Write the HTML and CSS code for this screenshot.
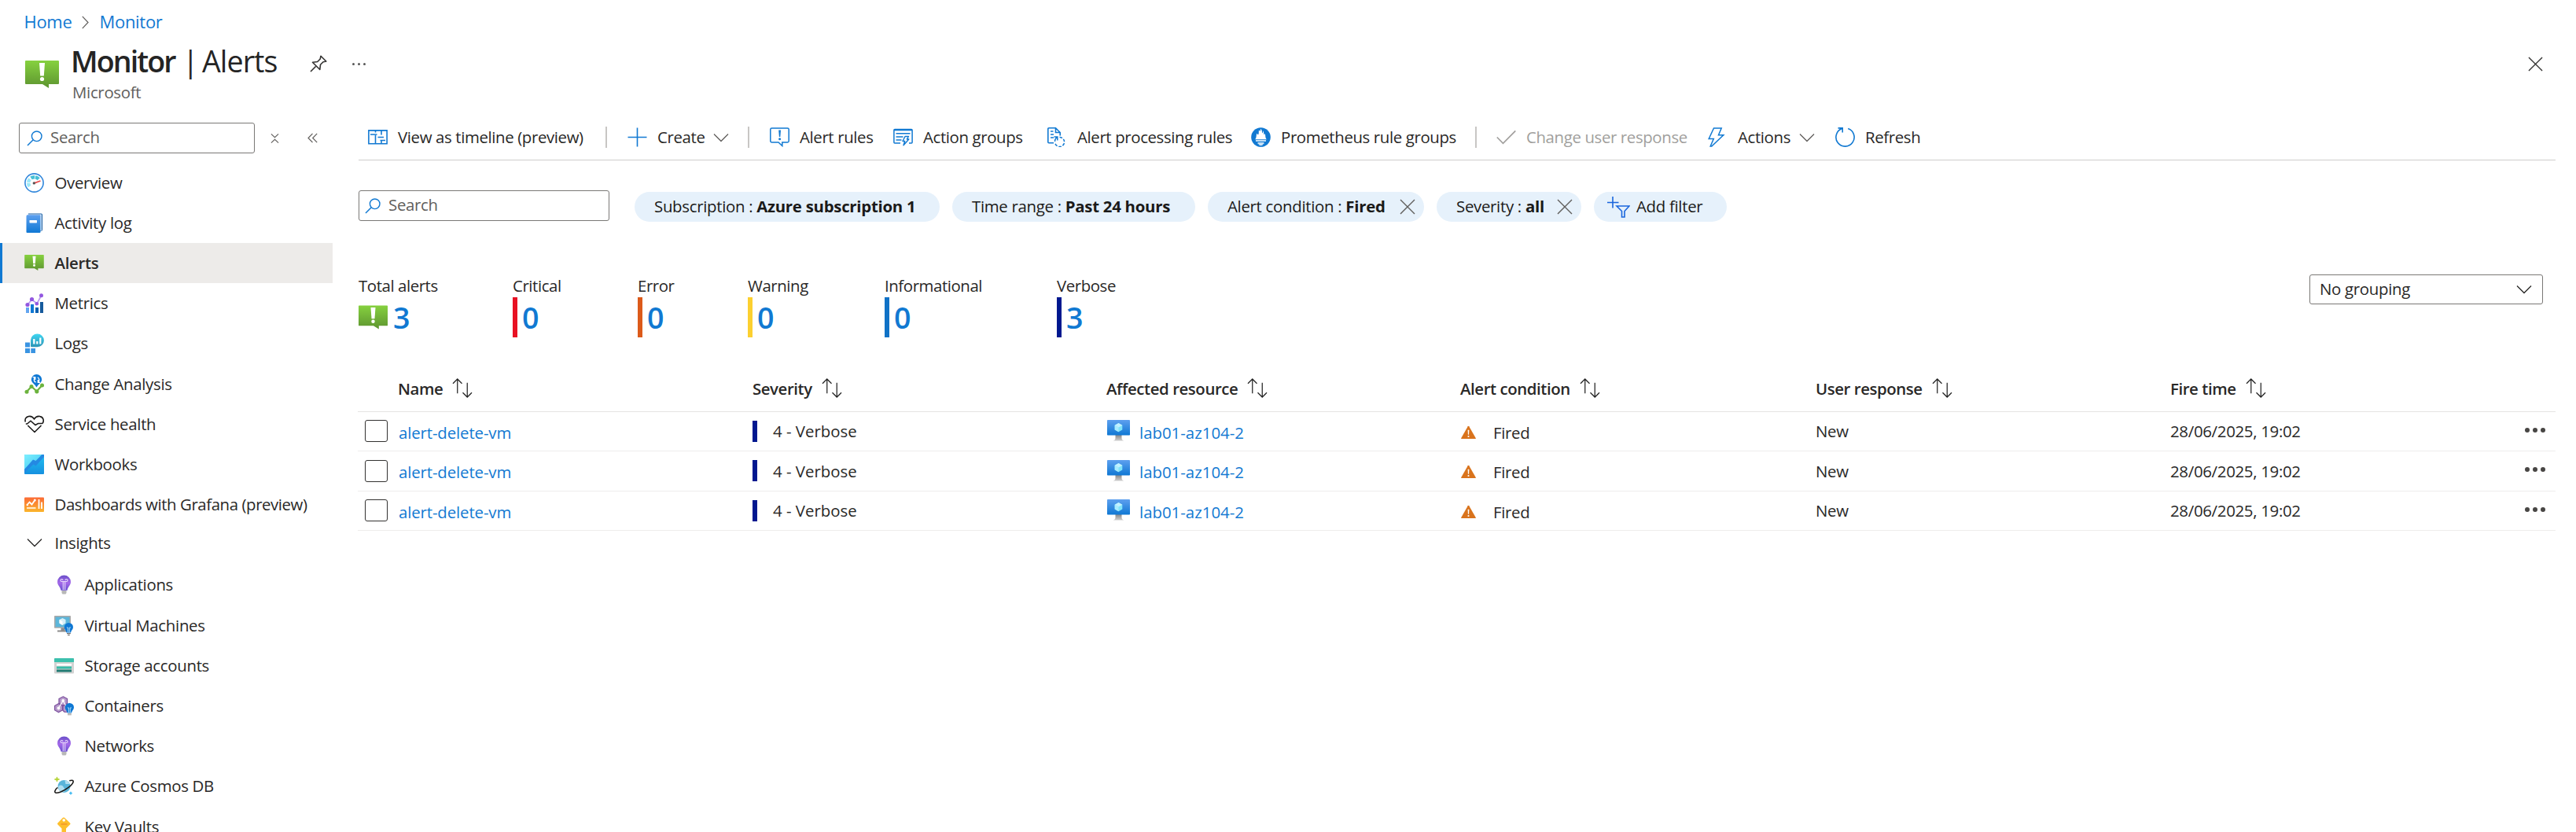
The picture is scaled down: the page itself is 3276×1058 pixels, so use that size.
FILE: index.html
```html
<!DOCTYPE html>
<html lang="en">
<head>
<meta charset="utf-8">
<title>Monitor | Alerts</title>
<link rel="stylesheet" href="styles.css">
</head>
<body>
<svg class="sprite" aria-hidden="true">
  <defs>
    <linearGradient id="g-green" x2="0" y2="1"><stop offset="0" stop-color="#86d13f"/><stop offset="1" stop-color="#5d9430"/></linearGradient>
    <linearGradient id="g-blue" x2="0" y2="1"><stop offset="0" stop-color="#5ea0ef"/><stop offset="1" stop-color="#0f78d4"/></linearGradient>
    <linearGradient id="g-teal" x2="0" y2="1"><stop offset="0" stop-color="#3fd6f2"/><stop offset="1" stop-color="#2a93b5"/></linearGradient>
    <linearGradient id="g-orange" x2="0" y2="1"><stop offset="0" stop-color="#fb6a35"/><stop offset="1" stop-color="#fbb52c"/></linearGradient>
    <linearGradient id="g-purple" x2="0" y2="1"><stop offset="0" stop-color="#6a50c8"/><stop offset=".5" stop-color="#a468ea"/><stop offset="1" stop-color="#6a50d0"/></linearGradient>
    <linearGradient id="g-sky" x2="1" y2="1"><stop offset="0" stop-color="#7fefff"/><stop offset="1" stop-color="#3fc8f0"/></linearGradient>
    <linearGradient id="g-azure" x2="0" y2="1"><stop offset="0" stop-color="#22c0f0"/><stop offset="1" stop-color="#1590e0"/></linearGradient>
    <linearGradient id="g-grey" x2="0" y2="1"><stop offset="0" stop-color="#868686"/><stop offset="1" stop-color="#d0d0d0"/></linearGradient>
  </defs>
  <symbol id="i-alert" viewBox="0 0 43 35">
    <path d="M1 0H42a1 1 0 0 1 1 1V29a1 1 0 0 1-1 1H30V35L22 30H1a1 1 0 0 1-1-1V1a1 1 0 0 1 1-1Z" fill="url(#g-green)"/>
    <path d="M18 3H25L23.800 19.500H19.200Z" fill="#fff"/><circle cx="21.500" cy="23.500" r="2.600" fill="#fff"/>
  </symbol>
  <symbol id="i-search" viewBox="0 0 20 20">
    <circle cx="12.700" cy="7.300" r="6.300" fill="none" stroke="currentColor" stroke-width="1.400"/><path d="M8.200 11.800 1 19" stroke="currentColor" stroke-width="1.500"/>
  </symbol>
  <symbol id="i-chevdown" viewBox="0 0 20 20"><path d="M1 5.500 10 14.500 19 5.500" fill="none" stroke="currentColor" stroke-width="1.300"/></symbol>
  <symbol id="i-x" viewBox="0 0 20 20"><path d="M1 1 19 19M19 1 1 19" stroke="currentColor" stroke-width="1.400"/></symbol>
  <symbol id="i-pin" viewBox="0 0 22 22">
    <path d="M1 21 7.500 14.500M14 1.200 20.800 8 17 8.800 13.500 12.300 12.800 18.500 3.500 9.200 9.700 8.500 13.200 5Z" fill="none" stroke="currentColor" stroke-width="1.600" stroke-linejoin="round"/>
  </symbol>
  <symbol id="i-collapse" viewBox="0 0 12 14"><path d="M1 .8 6 5.500 11 .8M1 13.200 6 8.500 11 13.200" fill="none" stroke="currentColor" stroke-width="1.200"/></symbol>
  <symbol id="i-dblleft" viewBox="0 0 13 13"><path d="M6.500 .8 1 6.500 6.500 12.200M12.200 .8 6.700 6.500 12.200 12.200" fill="none" stroke="currentColor" stroke-width="1.200"/></symbol>
  <symbol id="i-gauge" viewBox="0 0 25 25">
    <circle cx="12.500" cy="12.500" r="11.600" fill="#fff" stroke="#2f86db" stroke-width="1.600"/>
    <path d="M6.600 17A7.300 7.300 0 0 1 7.600 7.200" fill="none" stroke="#9be8f8" stroke-width="4.400" stroke-dasharray="4.500 .8"/>
    <path d="M8.500 6.400A7.300 7.300 0 0 1 18.500 8.300" fill="none" stroke="#46bfd6" stroke-width="4.400" stroke-dasharray="4.800 .8"/>
    <path d="M12.500 12.800 20.500 10" stroke="#e8484c" stroke-width="1.800"/><circle cx="12.300" cy="12.900" r="1.700" fill="#555"/>
  </symbol>
  <symbol id="i-log" viewBox="0 0 25 25">
    <path d="M5 .6H21.500a1.500 1.500 0 0 1 1.500 1.500V21a2 2 0 0 1-2 2H5Z" fill="#1a5fa5"/><path d="M4.500 1.500H21.800V22.500H4.500Z" fill="#e9f3fc"/>
    <path d="M2.500 4Q2.500 2.200 4 2.200H19.500a1 1 0 0 1 1 1V24a1 1 0 0 1-1 1H3.500a1 1 0 0 1-1-1Z" fill="url(#g-blue)"/>
    <rect x="6.500" y="9" width="9.500" height="3.400" rx=".6" fill="#fff"/>
  </symbol>
  <symbol id="i-metrics" viewBox="0 0 25 25">
    <path d="M2 18H6V25H2Z" fill="#63a5f0"/><path d="M8 14H12V25H8Z" fill="#0f78d4"/><path d="M14 18H18V25H14Z" fill="#0b5fb0"/><path d="M20 11H24V25H20Z" fill="#165a9c"/>
    <path d="M4 14.500 9.500 8 16 13 21.500 3" fill="none" stroke="#b99af0" stroke-width="1.700"/>
    <g fill="#9357e0"><circle cx="4" cy="14.500" r="2.600"/><circle cx="9.500" cy="7.500" r="2.600"/><circle cx="15.800" cy="13.300" r="2.300"/><circle cx="21.500" cy="2.800" r="2.500"/></g>
  </symbol>
  <symbol id="i-logs" viewBox="0 0 25 25">
    <path d="M1 11.500H7V17.500H1ZM1 19H7V25H1ZM8.300 19H14V25H8.300Z" fill="#3a94e2"/>
    <path d="M16.500 .5A8.300 8.300 0 1 1 16.500 17.300H9a1 1 0 0 1-1-1V8.500A8.300 8.300 0 0 1 16.500 .5Z" fill="url(#g-teal)"/>
    <path d="M12.300 7V13.500M16.300 10V13.500M20.300 5.500V13.500" stroke="#fff" stroke-width="2.200"/>
  </symbol>
  <symbol id="i-change" viewBox="0 0 25 25">
    <path d="M3 22 9 15.500 15.800 21.500 22.500 14" fill="none" stroke="#6cb33e" stroke-width="2.200"/>
    <g fill="#6cb33e"><circle cx="3" cy="22.300" r="2.500"/><circle cx="9" cy="15.500" r="2.500"/><circle cx="15.800" cy="21.800" r="2.600"/><circle cx="22.500" cy="14" r="2.500"/></g>
    <path d="M15.500 0A6.700 6.700 0 0 1 22.200 6.700C22.200 10.500 17.500 12.500 15.500 16.500C13.500 12.500 8.800 10.500 8.800 6.700A6.700 6.700 0 0 1 15.500 0Z" fill="#0f78d4"/>
    <path d="M13.500 4C11.500 6 12 9 14.500 10.200M17.500 10C19.700 8.200 19 5 16.800 3.800M13.800 7V3.700H10.700M17.300 7V10.400H20" fill="none" stroke="#fff" stroke-width="1.300"/>
  </symbol>
  <symbol id="i-heart" viewBox="0 0 25 25">
    <path d="M1.300 9.500C.3 6 2 3.200 5 2.600C8.500 1.700 11 3.500 12.500 5.800C14 3.500 16.500 1.700 20 2.600C24 3.300 25.500 8 23 11.500M1.800 12H3.500L8 8.200 14 13.500 17.500 11.500H23M4.300 14 13 22.500 21.500 14" fill="none" stroke="#1b1a19" stroke-width="1.600"/>
  </symbol>
  <symbol id="i-workbook" viewBox="0 0 25 25">
    <rect width="25" height="25" rx="1" fill="url(#g-azure)"/><path d="M1 0H22L14 10.500 12 7 0 19V1A1 1 0 0 1 1 0Z" fill="url(#g-sky)"/>
    <path d="M0 19 11 6.500 14.500 8 22.500 0H25V3L14.500 14.500 11.500 12.500 0 23.500Z" fill="#2489e2"/>
  </symbol>
  <symbol id="i-grafana" viewBox="0 0 25 25">
    <rect y="3.500" width="25" height="18.500" rx="1" fill="url(#g-orange)"/>
    <path d="M3.500 13 6.500 9.500 9.500 12.500 13.500 6.800M18.500 6V18M22 9.500V18" fill="none" stroke="#fff" stroke-width="1.800"/><path d="M3 17H14.500" stroke="#ffe9c8" stroke-width="2.200"/>
    <circle cx="13.300" cy="7" r="1.500" fill="#fff"/><circle cx="3.800" cy="13" r="1.300" fill="#fff"/>
  </symbol>
  <symbol id="i-bulb" viewBox="0 0 25 25">
    <path d="M9.500 20H15.500V23L14.500 24.500H10.500L9.500 23Z" fill="#b8b8b8"/>
    <path d="M12.500 .5A8.500 8.500 0 0 1 21 9C21 13 17.500 15 16.500 19.700H8.500C7.500 15 4 13 4 9A8.500 8.500 0 0 1 12.500 .5Z" fill="url(#g-purple)"/>
    <path d="M11.300 19V8.500H9.500A1.500 1.500 0 1 1 11 7M13.700 19V8.500H15.500A1.500 1.500 0 1 0 14 7M10 8.500H15" fill="none" stroke="#e9dcfb" stroke-width="1.100"/>
  </symbol>
  <symbol id="i-vminsight" viewBox="0 0 25 25">
    <path d="M8.500 15H13.500V18.500H17V20.500H4V18.500H8.500Z" fill="#8c8c8c"/><rect x="0" y="0" width="21" height="15.800" rx=".8" fill="#a9a9a9"/><rect x="1.500" y="1.500" width="18" height="12.800" fill="#5cb6da"/>
    <path d="M10.500 3 14.500 5V9.500L10.500 12 6.500 9.500V5Z" fill="#d6eff8"/><path d="M10.500 7.300V12L6.500 9.500V5Z" fill="#fff"/>
    <path d="M18.300 9A5.600 5.600 0 0 1 24 14.600C24 17.500 21.500 18.500 21 21.500H15.600C15 18.500 12.700 17.500 12.700 14.600A5.600 5.600 0 0 1 18.300 9Z" fill="#0f78d4"/>
    <path d="M17.400 21V15H15.800M19.300 21V15H21" fill="none" stroke="#a8daf5" stroke-width="1"/><path d="M16 22.600H20.800M17 24.500H19.800" stroke="#555" stroke-width="1"/>
  </symbol>
  <symbol id="i-storage" viewBox="0 0 25 25">
    <rect y="3" width="25" height="19.500" rx="1" fill="#d2d2d2"/><path d="M1 3H24a1 1 0 0 1 1 1V8H0V4A1 1 0 0 1 1 3Z" fill="#3cc0ad"/>
    <rect x="3" y="10" width="19" height="2.600" fill="#fff"/><rect x="3" y="13.500" width="19" height="3" fill="#38bba8"/><rect x="3" y="17.500" width="19" height="3" fill="#227c74"/>
  </symbol>
  <symbol id="i-container" viewBox="0 0 25 25">
    <g fill="#b79acb" stroke="#7b4f9d" stroke-width="1.200"><path d="M11.200 .8 16.500 3.500V9.500L11.200 12.300 6 9.500V3.500Z"/><path d="M5.500 9.800 10.500 12.500V18L5.500 20.800 .6 18V12.500Z"/><path d="M16 11 18 12V20.500H13L11 18.500V13Z"/></g>
    <path d="M11.200 6 5.500 15.500M11.200 6 15.500 14" stroke="#fff" stroke-width="1.300"/><circle cx="11.200" cy="6" r="1.900" fill="#fff"/><circle cx="5.500" cy="15.500" r="1.900" fill="#fff"/>
    <path d="M19.300 9A5.600 5.600 0 0 1 25 14.600C25 17.500 22.500 18.500 22 21.500H16.600C16 18.500 13.700 17.500 13.700 14.600A5.600 5.600 0 0 1 19.300 9Z" fill="#0f78d4"/>
    <path d="M18.400 21V15H16.800M20.300 21V15H22" fill="none" stroke="#a8daf5" stroke-width="1"/><path d="M17 22H21.800V24.500H17Z" fill="#b8b8b8"/>
  </symbol>
  <symbol id="i-cosmos" viewBox="0 0 26 25">
    <circle cx="13" cy="13" r="8.300" fill="#59b4d9"/><path d="M5.500 13.500C7 10.500 11 11 12 13.500S16 16 13 20.500C8 20.500 5 17 5.500 13.500M14 5C18 5 20 8 20.500 10H15Z" fill="#b0def0"/>
    <path d="M20 5.500C24 4.300 26 5 24.800 8C23 12 15 18 8 20.500C3 22.300 0 22 1 19C1.600 17.200 3 15.600 4.600 14.500" fill="none" stroke="#1b1a19" stroke-width="1.600"/>
    <path d="M3.600 .5 4.300 3 6.800 3.700 4.300 4.400 3.600 6.900 2.900 4.400 .4 3.700 2.900 3Z" fill="#b4d334" stroke="#b4d334"/>
    <path d="M21.800 20V24M19.800 22H23.800" stroke="#32b5f0" stroke-width="1.400"/>
  </symbol>
  <symbol id="i-key" viewBox="0 0 25 25">
    <path d="M11 .8Q12 0 13 .8L20 7.500Q21 8.500 20 9.500L15 14.500V22L12.500 25 9.500 22V14.500L4.500 9.500Q3.500 8.500 4.500 7.500Z" fill="#fdbf2d"/><circle cx="12.200" cy="4" r="1.800" fill="#fff"/><path d="M8.500 9H16.500" stroke="#f59a2a" stroke-width="1.700"/>
  </symbol>
  <symbol id="i-timeline" viewBox="0 0 25 25">
    <path d="M.9 3.900H24.100V20.700H.9ZM9.500 10V20.500M17 4V9.500M17 17V20.500M9.500 4V6.500M3 9H11.500M12.500 12.500H20M15.500 16.500H22" fill="none" stroke="currentColor" stroke-width="1.600"/>
  </symbol>
  <symbol id="i-plus" viewBox="0 0 25 25"><path d="M12.500 .5V24.500M.5 12.500H24.500" stroke="currentColor" stroke-width="1.600"/></symbol>
  <symbol id="i-rule" viewBox="0 0 25 25">
    <path d="M2.500 .9H22.500A1.700 1.700 0 0 1 24.200 2.600V17.300A1.700 1.700 0 0 1 22.500 19H15.800V23.500L11 19H2.500A1.700 1.700 0 0 1 .8 17.300V2.600A1.700 1.700 0 0 1 2.500 .9Z" fill="none" stroke="currentColor" stroke-width="1.500"/>
    <path d="M11.200 3.500H14L13.300 12H11.900Z" fill="currentColor"/><circle cx="12.600" cy="14.800" r="1.500" fill="currentColor"/>
  </symbol>
  <symbol id="i-group" viewBox="0 0 25 25">
    <path d="M9 20H1.900A1 1 0 0 1 .9 19V3.600A1 1 0 0 1 1.900 2.600H23.100A1 1 0 0 1 24.100 3.600V19A1 1 0 0 1 23.100 20H20M1 3.500H24M3.500 7.800H21.500M3.500 11.900H12.500M3.500 16H10.500" fill="none" stroke="currentColor" stroke-width="1.500"/>
    <path d="M15 11.500H19.500L17.300 15H19.800L13 22.800 14.700 17.500H12Z" fill="#fff" stroke="currentColor" stroke-width="1.400" stroke-linejoin="round"/>
  </symbol>
  <symbol id="i-processing" viewBox="0 0 25 25">
    <path d="M8 19.700H1.900A1.100 1.100 0 0 1 .8 18.600V1.900A1.100 1.100 0 0 1 1.900 .8H10.500L16.200 6.500V10.500M10.500 .8V6.500H16.200M4 5H7.500M4 9H8M4 13H8" fill="none" stroke="currentColor" stroke-width="1.600"/>
    <path d="M8.500 12H12.800V16.500M12.800 12.300C10.500 13.500 9.500 15.500 9.500 18" fill="none" stroke="currentColor" stroke-width="1.500"/>
    <path d="M15.500 12.500A6 6 0 1 1 9.600 19" fill="none" stroke="currentColor" stroke-width="1.500" stroke-dasharray="3.600 1.800"/>
  </symbol>
  <symbol id="i-prom" viewBox="0 0 25 25">
    <circle cx="12.500" cy="12.500" r="12.300" fill="currentColor"/>
    <path d="M5.200 15.200C7.500 12.500 6 10.500 7.600 7.500C8 9 8.800 9.500 9.300 9C10.300 7 9.300 4.500 10.300 3C10.800 5.500 12 5.500 12.300 1.800C14.500 4 13.700 6.500 14.600 7.500C15.300 6.500 14.900 5 15.300 4.200C16.800 7 15.800 8.500 16.800 9.200C17.300 9 17.500 8.500 17.500 7.800C19 10.500 17.500 12.500 19.800 15.200Z" fill="#fff"/>
    <path d="M6 17H19M8.500 20H16.500" stroke="#fff" stroke-width="1.500"/><path d="M9.300 21.200H15.700Q15 23 12.500 23T9.300 21.200" fill="#fff"/>
  </symbol>
  <symbol id="i-check" viewBox="0 0 25 25"><path d="M.8 12.500 8.500 20.300 24.300 4.300" fill="none" stroke="currentColor" stroke-width="1.700"/></symbol>
  <symbol id="i-bolt" viewBox="0 0 25 25"><path d="M7.500 1H17.200L13.500 9.700H19.800L4.800 24H3.200L7.300 14.500H1.200Z" fill="none" stroke="currentColor" stroke-width="1.500"/></symbol>
  <symbol id="i-refresh" viewBox="0 0 25 25"><path d="M16.200 1.500A11.600 11.600 0 1 1 8.500 1.600M3.500 .9H9.200V6.500" fill="none" stroke="currentColor" stroke-width="1.600"/></symbol>
  <symbol id="i-addfilter" viewBox="0 0 29 27"><path d="M7 0V14.500M0 7.500H14.500M12 12H28L22 18.500V26H18.500V18.500Z" fill="none" stroke="#1a66dd" stroke-width="1.600"/></symbol>
  <symbol id="i-sort" viewBox="0 0 27 26"><path d="M7 1V20M1 7 7 1 13 7M20 6V25M14 19 20 25 26 19" fill="none" stroke="#242424" stroke-width="1.300"/></symbol>
  <symbol id="i-vm" viewBox="0 0 29 27">
    <path d="M10.500 19H18.500V23Q18.500 25.500 21.500 26.500H7.500Q10.500 25.500 10.500 23Z" fill="url(#g-grey)"/><rect width="29" height="19.500" rx=".8" fill="url(#g-blue)"/>
    <path d="M14.500 4 19.300 6.800V12.500L14.500 15.300 9.700 12.500V6.800Z" fill="#7fe3fa"/><path d="M14.500 4 19.300 6.800 14.500 9.600 9.700 6.800Z" fill="#c3f1ff"/><path d="M14.500 9.600V15.300L9.700 12.500V6.800Z" fill="#a8ebff"/>
  </symbol>
  <symbol id="i-fired" viewBox="0 0 20 18">
    <path d="M9.200 .9Q10 -.3 10.800 .9L19.700 16.300Q20.200 17.500 19 17.500H1Q-.2 17.500 .3 16.300Z" fill="#d9731c"/><path d="M9.100 5.500H10.900L10.600 12H9.400Z" fill="#fff"/><circle cx="10" cy="14.300" r="1.100" fill="#fff"/>
  </symbol>
</svg>

<nav class="breadcrumb">
  <a>Home</a>
  <svg class="crumb-sep" viewBox="0 0 9 17"><path d="M.8 .8 8 8.500 .8 16.200" fill="none" stroke="#605e5c" stroke-width="1.200"/></svg>
  <a>Monitor</a>
</nav>

<header class="title-bar">
  <svg class="title-icon"><use href="#i-alert"/></svg>
  <div class="title-text">
    <h1><strong>Monitor</strong><span class="pipe">|</span><span class="title-page">Alerts</span></h1>
    <div class="subtitle">Microsoft</div>
  </div>
  <svg class="pin"><use href="#i-pin"/></svg>
  <div class="title-dots"><i></i><i></i><i></i></div>
  <svg class="close"><use href="#i-x"/></svg>
</header>

<div class="body">
  <aside class="sidebar">
    <div class="side-tools">
      <div class="search-box side-search"><svg><use href="#i-search"/></svg><span>Search</span></div>
      <svg class="collapse"><use href="#i-collapse"/></svg>
      <svg class="dblleft"><use href="#i-dblleft"/></svg>
    </div>
    <ul class="menu">
      <li><svg><use href="#i-gauge"/></svg><span>Overview</span></li>
      <li><svg><use href="#i-log"/></svg><span>Activity log</span></li>
      <li class="active"><svg class="menu-alert"><use href="#i-alert"/></svg><span>Alerts</span></li>
      <li><svg><use href="#i-metrics"/></svg><span>Metrics</span></li>
      <li><svg><use href="#i-logs"/></svg><span>Logs</span></li>
      <li><svg><use href="#i-change"/></svg><span>Change Analysis</span></li>
      <li><svg><use href="#i-heart"/></svg><span>Service health</span></li>
      <li><svg><use href="#i-workbook"/></svg><span>Workbooks</span></li>
      <li><svg><use href="#i-grafana"/></svg><span class="long">Dashboards with Grafana (preview)</span></li>
      <li class="group"><svg class="chev"><use href="#i-chevdown"/></svg><span>Insights</span></li>
      <li class="sub"><svg><use href="#i-bulb"/></svg><span>Applications</span></li>
      <li class="sub"><svg><use href="#i-vminsight"/></svg><span>Virtual Machines</span></li>
      <li class="sub"><svg><use href="#i-storage"/></svg><span>Storage accounts</span></li>
      <li class="sub"><svg><use href="#i-container"/></svg><span>Containers</span></li>
      <li class="sub"><svg><use href="#i-bulb"/></svg><span>Networks</span></li>
      <li class="sub"><svg><use href="#i-cosmos"/></svg><span>Azure Cosmos DB</span></li>
      <li class="sub"><svg><use href="#i-key"/></svg><span>Key Vaults</span></li>
    </ul>
  </aside>

  <main class="main">
    <div class="toolbar">
      <div class="cmd"><svg><use href="#i-timeline"/></svg><span>View as timeline (preview)</span></div>
      <div class="sep"></div>
      <div class="cmd"><svg><use href="#i-plus"/></svg><span>Create</span><svg class="chev"><use href="#i-chevdown"/></svg></div>
      <div class="sep"></div>
      <div class="cmd"><svg><use href="#i-rule"/></svg><span>Alert rules</span></div>
      <div class="cmd"><svg><use href="#i-group"/></svg><span>Action groups</span></div>
      <div class="cmd"><svg><use href="#i-processing"/></svg><span>Alert processing rules</span></div>
      <div class="cmd"><svg><use href="#i-prom"/></svg><span>Prometheus rule groups</span></div>
      <div class="sep"></div>
      <div class="cmd disabled"><svg><use href="#i-check"/></svg><span>Change user response</span></div>
      <div class="cmd"><svg><use href="#i-bolt"/></svg><span>Actions</span><svg class="chev"><use href="#i-chevdown"/></svg></div>
      <div class="cmd"><svg><use href="#i-refresh"/></svg><span>Refresh</span></div>
    </div>

    <div class="filters">
      <div class="search-box filter-search"><svg><use href="#i-search"/></svg><span>Search</span></div>
      <div class="pill subscription"><span>Subscription : <b>Azure subscription 1</b></span></div>
      <div class="pill time"><span>Time range : <b>Past 24 hours</b></span></div>
      <div class="pill condition"><span>Alert condition : <b>Fired</b></span><svg class="remove"><use href="#i-x"/></svg></div>
      <div class="pill severity"><span>Severity : <b>all</b></span><svg class="remove"><use href="#i-x"/></svg></div>
      <div class="pill add"><svg class="add-icon"><use href="#i-addfilter"/></svg><span>Add filter</span></div>
    </div>

    <div class="overview">
      <div class="stats">
        <div class="stat total"><div class="label">Total alerts</div><div class="value"><svg><use href="#i-alert"/></svg>3</div></div>
        <div class="stat critical"><div class="label">Critical</div><div class="value">0</div></div>
        <div class="stat error"><div class="label">Error</div><div class="value">0</div></div>
        <div class="stat warning"><div class="label">Warning</div><div class="value">0</div></div>
        <div class="stat info"><div class="label">Informational</div><div class="value">0</div></div>
        <div class="stat verbose"><div class="label">Verbose</div><div class="value">3</div></div>
      </div>
      <div class="select"><span>No grouping</span><svg class="chev"><use href="#i-chevdown"/></svg></div>
    </div>

    <div class="table">
      <div class="row head">
        <div></div>
        <div>Name<svg><use href="#i-sort"/></svg></div>
        <div>Severity<svg><use href="#i-sort"/></svg></div>
        <div>Affected resource<svg><use href="#i-sort"/></svg></div>
        <div>Alert condition<svg><use href="#i-sort"/></svg></div>
        <div>User response<svg><use href="#i-sort"/></svg></div>
        <div>Fire time<svg><use href="#i-sort"/></svg></div>
      </div>
      <div class="row">
        <div class="check"><i></i></div>
        <div class="low"><a>alert-delete-vm</a></div>
        <div class="sev">4 - Verbose</div>
        <div class="low res"><svg><use href="#i-vm"/></svg><a>lab01-az104-2</a></div>
        <div class="low fired"><svg><use href="#i-fired"/></svg>Fired</div>
        <div>New</div>
        <div>28/06/2025, 19:02</div>
        <div class="more"><i></i><i></i><i></i></div>
      </div>
      <div class="row">
        <div class="check"><i></i></div>
        <div class="low"><a>alert-delete-vm</a></div>
        <div class="sev">4 - Verbose</div>
        <div class="low res"><svg><use href="#i-vm"/></svg><a>lab01-az104-2</a></div>
        <div class="low fired"><svg><use href="#i-fired"/></svg>Fired</div>
        <div>New</div>
        <div>28/06/2025, 19:02</div>
        <div class="more"><i></i><i></i><i></i></div>
      </div>
      <div class="row">
        <div class="check"><i></i></div>
        <div class="low"><a>alert-delete-vm</a></div>
        <div class="sev">4 - Verbose</div>
        <div class="low res"><svg><use href="#i-vm"/></svg><a>lab01-az104-2</a></div>
        <div class="low fired"><svg><use href="#i-fired"/></svg>Fired</div>
        <div>New</div>
        <div>28/06/2025, 19:02</div>
        <div class="more"><i></i><i></i><i></i></div>
      </div>
    </div>
  </main>
</div>
</body>
</html>
```
FILE: styles.css
```css
* { box-sizing: border-box; }
html, body { margin: 0; height: 1058px; overflow: hidden; background: #fff; }
body {
  display: flex;
  flex-direction: column;
  font-family: "Open Sans", "Noto Sans", sans-serif;
  font-size: 20.4px;
  letter-spacing: -0.3px;
  color: #292827;
  white-space: nowrap;
}
a { color: #1179d2; }
svg { display: block; flex: none; overflow: visible; }
.sprite { position: absolute; width: 0; height: 0; }
.chev { width: 20px; height: 20px; }

/* Page heading */
.breadcrumb { display: flex; align-items: center; height: 53px; padding-left: 30.500px; font-size: 22px; flex: none; }
.crumb-sep { width: 9px; height: 17px; margin: 3px 13px 0 13px; }
.title-bar { display: flex; align-items: flex-start; height: 87px; padding-left: 32px; flex: none; }
.title-icon { width: 43px; height: 35px; margin-top: 24px; }
.title-text { width: 316px; padding-left: 15px; color: #242424; }
h1 { display: flex; margin: 0; font-size: 37.6px; line-height: 50px; font-weight: 400; letter-spacing: -0.9px; }
h1 strong { font-weight: 650; letter-spacing: -1.9px; width: 142px; }
.pipe { width: 25px; }
.subtitle { padding-left: 2px; line-height: 28px; color: #605e5c; }
.pin { width: 22px; height: 22px; margin: 17px 0 0 3px; color: #323130; }
.title-dots { display: flex; gap: 4px; margin: 27px 0 0 32px; }
.title-dots i { width: 3px; height: 3px; border-radius: 50%; background: #555; }
.close { width: 19px; height: 19px; margin: 19px 42px 0 auto; color: #323130; }
.body { display: flex; flex: 1; min-height: 0; }

/* Side menu */
.sidebar { width: 456px; flex: none; padding-top: 16px; }
.side-tools { display: flex; align-items: center; height: 39px; padding-left: 24px; color: #605e5c; }
.search-box { display: flex; align-items: center; height: 39px; border: 1px solid #7a7876; border-radius: 3px; padding-left: 8px; color: #605e5c; }
.search-box svg { width: 20px; height: 20px; color: #1179d2; }
.search-box span { margin: -3px 0 0 10px; }
.side-search { width: 300px; padding-left: 9px; }
.collapse { width: 11px; height: 14px; margin-left: 20px; }
.dblleft { width: 13px; height: 13px; margin-left: 36px; }
.menu { list-style: none; margin: 11.500px 0 0; padding: 0; }
.menu li { display: flex; align-items: center; width: 423px; height: 51.2px; padding-left: 31px; }
.menu li svg { width: 25px; height: 25px; margin-right: 13.500px; }
.menu li span { margin-top: -1px; }
.menu li .long { letter-spacing: -0.42px; }
.menu li .menu-alert { height: 20px; }
.menu li.active { background: #edebe9; font-weight: 600; padding-left: 28px; border-left: 3px solid #1179d2; }
.menu li.sub { padding-left: 69px; }
.menu li.group { padding-bottom: 5px; }
.menu li .chev { width: 20px; height: 20px; margin: 0 15.500px 0 3px; }

/* Command bar */
.main { flex: 1; min-width: 0; }
.toolbar {
  display: grid;
  grid-template-columns: 303px 27px 154px 27px 157px 196px 259px 286px 26px 269px 162px auto;
  align-items: center;
  height: 59px;
  margin: 5px 26px 0 0;
  padding-left: 12px;
  border-bottom: 1px solid #cfcdcb;
  letter-spacing: -0.37px;
}
.cmd { display: flex; align-items: center; }
.cmd svg { width: 25px; height: 25px; color: #1179d2; }
.cmd span { margin-left: 13px; }
.cmd .chev { width: 20px; height: 20px; margin: 2px 0 0 11px; color: #605e5c; }
.cmd.disabled, .cmd.disabled svg { color: #a19f9d; }
.sep { width: 1.500px; height: 27px; margin-left: -1px; background: #c8c6c4; }

/* Filters */
.filters { display: flex; align-items: flex-start; gap: 16px; padding-top: 38px; }
.filter-search { width: 319px; padding-left: 7px; margin-right: 16px; }
.pill { display: flex; align-items: center; height: 38px; margin-top: 2px; padding-left: 25px; border-radius: 19px; background: #e6f1fb; color: #1b1a19; }
.pill span { margin-top: -2px; }
.pill b { font-weight: 700; letter-spacing: -0.27px; }
.subscription { width: 388px; }
.time { width: 309px; }
.condition { width: 275px; }
.severity { width: 184px; }
.add { width: 169px; padding-left: 17px; }
.remove { width: 20px; height: 20px; margin: 0 11px 0 auto; color: #605e5c; }
.add-icon { width: 29px; height: 27px; margin-right: 8px; }

/* Summary */
.overview { display: flex; justify-content: space-between; align-items: flex-start; padding-top: 66px; }
.stats { display: grid; grid-template-columns: 196px 159px 140px 174px 219px 160px; margin-top: -0.500px; }
.label { line-height: 30px; letter-spacing: -0.42px; }
.value { display: flex; align-items: center; height: 51px; border-left: 6.500px solid; padding-left: 6px; font-size: 37.6px; font-weight: 600; color: #1179d2; }
.total .value { border: 0; padding-left: 0; }
.total svg { width: 37px; height: 37px; margin-right: 7px; }
.critical .value { border-color: #e81123; }
.error .value { border-color: #dc5a1a; }
.warning .value { border-color: #fcd030; }
.info .value { border-color: #1072c6; }
.verbose .value { border-color: #00188f; }
.select { display: flex; align-items: center; justify-content: space-between; width: 297px; height: 38px; margin: 1px 42px 0 0; padding: 0 13px 0 12px; border: 1px solid #7a7876; border-radius: 3px; }
.select span { margin-top: -2px; }

/* Alert list */
.table { margin: 36px 26px 0 -1px; }
.row { display: grid; grid-template-columns: 51px 451px 450px 450px 452px 451px 450px 1fr; align-items: center; height: 50.6px; border-bottom: 1px solid #eeedec; }
.row > div { display: flex; align-items: center; }
.row.head { height: 59px; font-weight: 600; letter-spacing: -0.42px; border-color: #e5e4e3; }
.head svg { width: 26px; height: 25px; margin-left: 12px; }
.check { padding-left: 9px; }
.check i { width: 29px; height: 28px; border: 1.500px solid #323130; border-radius: 3px; }
.row .low { padding: 3px 0 0 1px; }
.row .low a { letter-spacing: -0.12px; }
.row .res a { letter-spacing: 0; }
.row .sev { letter-spacing: 0; }
.sev::before { content: ""; width: 6px; height: 27px; margin-right: 20px; background: #00188f; }
.res svg { width: 29px; height: 27px; margin: -4px 12px 0 0; }
.fired svg { width: 19px; height: 18px; margin-right: 22px; }
.more { gap: 4px; justify-content: flex-end; padding: 0 13px 3px 0; }
.more i { width: 6px; height: 6px; border-radius: 50%; background: #484644; }
```
